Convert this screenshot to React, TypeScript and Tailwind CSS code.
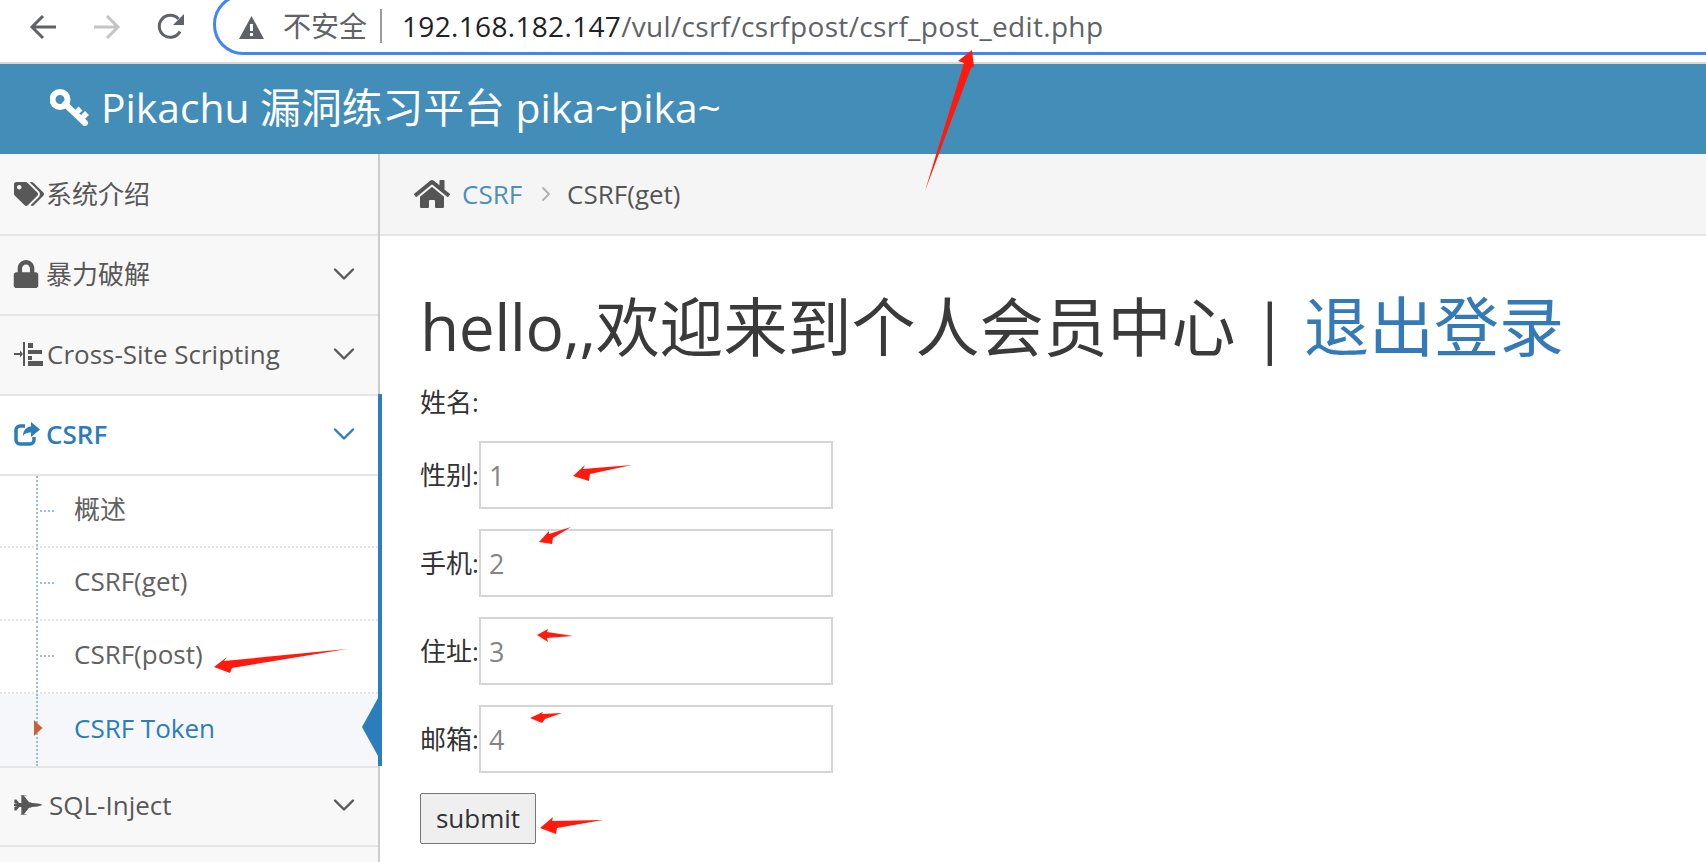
import type { FC, ReactNode } from "react";
import { ChevronDown, ChevronRight } from "lucide-react";
import { FaFighterJet, FaHome, FaLock, FaTags } from "react-icons/fa";

const fontClass = "font-['Open_Sans','Noto_Sans_CJK_SC',sans-serif]";

const KeyIcon = () => (
  <svg width="39" height="37" viewBox="0 0 39 37" fill="none" stroke="currentColor">
    <circle cx="10" cy="10.500" r="7.500" strokeWidth="6" />
    <path d="M15 15l20 19" strokeWidth="6" strokeLinecap="round" />
    <path d="M25 25l5.500-5.500M31 30l6-6" strokeWidth="5.500" />
  </svg>
);

const XssIcon = () => (
  <svg width="29" height="24" viewBox="0 0 29 24" fill="currentColor">
    <path d="M0 11h6V8.500l3 3.500-3 3.500V13H0z" />
    <rect x="9" y="0" width="2" height="24" />
    <rect x="14" y="1" width="5" height="5" />
    <rect x="14" y="8" width="14" height="4" />
    <rect x="14" y="14" width="4" height="4" />
    <rect x="14" y="19" width="15" height="5" />
  </svg>
);

const ShareIcon = () => (
  <svg width="26" height="24" viewBox="0 0 26 24" fill="none">
    <path d="M20 15v3a4 4 0 0 1-4 4H6a4 4 0 0 1-4-4V8a4 4 0 0 1 4-4h5" stroke="currentColor" strokeWidth="3.500" />
    <path d="M17 0l9 7.500-9 7.500v-4.500c-4 0-7 1-8 4 0-6 3-9.500 8-10z" fill="currentColor" />
  </svg>
);

type MenuRowProps = {
  icon: ReactNode;
  label: string;
  arrow?: boolean;
  active?: boolean;
  className?: string;
  labelClass?: string;
};

const MenuRow: FC<MenuRowProps> = ({
  icon,
  label,
  arrow = true,
  active,
  className = "h-[80px] pb-[2px]",
  labelClass = "",
}) => (
  <div
    className={`flex items-center border-b-2 border-[#e5e5e5] pl-[14px] pr-[16px] text-[26px] ${className} ${
      active ? "bg-white text-[#2b7dbc]" : "bg-[#f8f8f8] text-[#585858]"
    }`}
  >
    <span className="flex w-[32px] shrink-0 items-center">{icon}</span>
    <span className={`flex-1 ${labelClass}`}>{label}</span>
    {arrow && <ChevronDown size={36} strokeWidth={1.6} />}
  </div>
);

const SubRow: FC<{ label: string; current?: boolean; className?: string }> = ({
  label,
  current,
  className = "h-[73px]",
}) => (
  <div
    className={`relative flex items-center pb-[4px] pl-[74px] text-[26px] ${className} ${
      current ? "bg-[#f5f7fa] text-[#2b7dbc]" : "border-b-2 border-dotted border-[#e4e4e4] bg-white text-[#616161]"
    }`}
  >
    <span className="absolute bottom-0 left-[36px] top-0 border-l-2 border-dotted border-[#9dbdd6]" />
    {current ? (
      <svg className="absolute left-[34px] top-[26px]" width="9" height="16" viewBox="0 0 9 16">
        <path d="M0 0l8.500 8L0 16z" fill="#c86139" />
      </svg>
    ) : (
      <span className="absolute left-[40px] top-[34px] w-[14px] border-t-2 border-dotted border-[#9dbdd6]" />
    )}
    {label}
    {current && (
      <svg className="absolute right-0 top-[4px]" width="16" height="58" viewBox="0 0 16 58">
        <path d="M16 0v58L0 29z" fill="#2b7dbc" />
      </svg>
    )}
  </div>
);

const Field: FC<{ label: string; value: string }> = ({ label, value }) => (
  <div className="flex items-center">
    <span className="w-[59px] shrink-0">{label}</span>
    <input
      readOnly
      value={value}
      className="h-[68px] w-[354px] border-2 border-[#d5d5d5] bg-white px-[8px] text-[27px] text-[#858585] outline-none"
    />
  </div>
);

// red marks somebody drew on the screenshot
const arrows = [
  "972,50 958,61 964,63 925,191 971,68 974,67",
  "214,667 227,657 224,661 347,649 232,668 230,673",
  "573,476 585,465 583,469 632,465 590,474 589,481",
  "539,542 549,531 549,534 571,527 553,538 552,544",
  "537,635 548,629 547,632 573,636 547,638 548,642",
  "530,718 543,712 542,714 562,713 545,719 542,723",
  "540,828 553,817 552,821 603,820 557,828 556,834",
];

export default function App() {
  return (
    <div className={`relative h-[862px] w-[1706px] overflow-hidden bg-white ${fontClass}`}>
      <div className="flex h-[64px] items-start overflow-hidden border-b-2 border-[#d9d9d9] bg-white pl-[29px]">
        <svg className="mt-[13px] text-[#5f6368]" width="28" height="28" viewBox="0 0 28 28" fill="none" stroke="currentColor" strokeWidth="3">
          <path d="M27 14H4M14 3L3 14l11 11" />
        </svg>
        <svg className="ml-[36px] mt-[13px] text-[#c4c4c4]" width="28" height="28" viewBox="0 0 28 28" fill="none" stroke="currentColor" strokeWidth="3">
          <path d="M1 14h23M14 3l11 11-11 11" />
        </svg>
        <svg className="ml-[36px] mt-[13px] text-[#5f6368]" width="28" height="28" viewBox="0 0 28 28" fill="none">
          <path d="M23 18.500A11 11 0 1 1 21.500 6" stroke="currentColor" strokeWidth="3" />
          <path d="M27 1v11H16z" fill="currentColor" />
        </svg>
        <div className="-mr-10 ml-[28px] mt-[-6px] flex h-[61px] flex-1 items-center rounded-l-[30px] border-[3px] border-[#4285f4] pl-[23px] pt-[3px]">
          <svg className="mt-[2px]" width="25" height="23" viewBox="0 0 25 23">
            <path d="M12.500 0L25 23H0z" fill="#5f6368" />
            <rect x="11" y="8" width="3" height="7" fill="#fff" />
            <rect x="11" y="17" width="3" height="3" fill="#fff" />
          </svg>
          <span className="ml-[19px] text-[28px] text-[#5f6368]">不安全</span>
          <span className="ml-[13px] h-[34px] border-l-2 border-[#9a9a9a]" />
          <span className="ml-[20px] whitespace-nowrap text-[28px] tracking-[0.33px] text-[#5f6368]">
            <span className="text-[#202124]">192.168.182.147</span>/vul/csrf/csrfpost/csrf_post_edit.php
          </span>
        </div>
      </div>

      <div className="flex h-[90px] items-center bg-[#438eb9] pb-[3px] pl-[50px] text-white">
        <KeyIcon />
        <span className="ml-[12px] text-[40.8px]">Pikachu 漏洞练习平台 pika~pika~</span>
      </div>

      <div className="flex h-[708px]">
        <aside className="w-[380px] shrink-0 border-r-2 border-[#cccccc] bg-[#f8f8f8]">
          <MenuRow icon={<FaTags size={30} />} label="系统介绍" arrow={false} className="h-[82px]" />
          <MenuRow icon={<FaLock size={28} className="-ml-[2px]" />} label="暴力破解" />
          <MenuRow icon={<XssIcon />} label="Cross-Site Scripting" labelClass="pl-[1px]" />
          <div className="relative z-10 -mt-[2px] w-[382px] border-r-4 border-[#2b7dbc] pt-[2px]">
            <MenuRow icon={<ShareIcon />} label="CSRF" active labelClass="font-semibold" />
            <SubRow label="概述" className="h-[72px]" />
            <SubRow label="CSRF(get)" />
            <SubRow label="CSRF(post)" />
            <SubRow label="CSRF Token" current className="h-[72px]" />
          </div>
          <MenuRow
            icon={<FaFighterJet size={28} />}
            label="SQL-Inject"
            labelClass="pl-[3px]"
            className="h-[81px] border-t-2 pb-[3px]"
          />
        </aside>

        <main className="flex-1">
          <div className="flex h-[82px] items-center border-b-2 border-[#e5e5e5] bg-[#f5f5f5] pl-[34px] text-[26px]">
            <FaHome size={36} className="text-[#555555]" />
            <span className="ml-[12px] text-[#4c8fbd]">CSRF</span>
            <ChevronRight size={24} className="ml-[12px] text-[#b2b2b2]" />
            <span className="ml-[9px] text-[#555555]">CSRF(get)</span>
          </div>

          <div className="flex flex-col items-start pl-[40px] pt-[55px] text-[26px] text-[#333333]">
            <h1 className="mb-[23px] whitespace-nowrap text-[64px] leading-[70px] text-[#3a3a3a]">
              <span className="tracking-[-0.5px]">hello,,</span>欢迎来到个人会员中心 |{" "}
              <span className="text-[65px] text-[#337ab7]">退出登录</span>
            </h1>
            <div className="mb-[21px] h-[35px] leading-[35px]">姓名:</div>
            <div className="flex flex-col gap-[20px]">
              <Field label="性别:" value="1" />
              <Field label="手机:" value="2" />
              <Field label="住址:" value="3" />
              <Field label="邮箱:" value="4" />
            </div>
            <button className="mt-[20px] h-[51px] w-[116px] rounded-[2px] border border-[#767676] bg-[#efefef] text-[26px]">
              submit
            </button>
          </div>
        </main>
      </div>

      <svg className="pointer-events-none absolute left-0 top-0 z-20" width="1706" height="862" viewBox="0 0 1706 862">
        {arrows.map((points) => (
          <polygon key={points} points={points} fill="#ff1a0d" />
        ))}
      </svg>
    </div>
  );
}
